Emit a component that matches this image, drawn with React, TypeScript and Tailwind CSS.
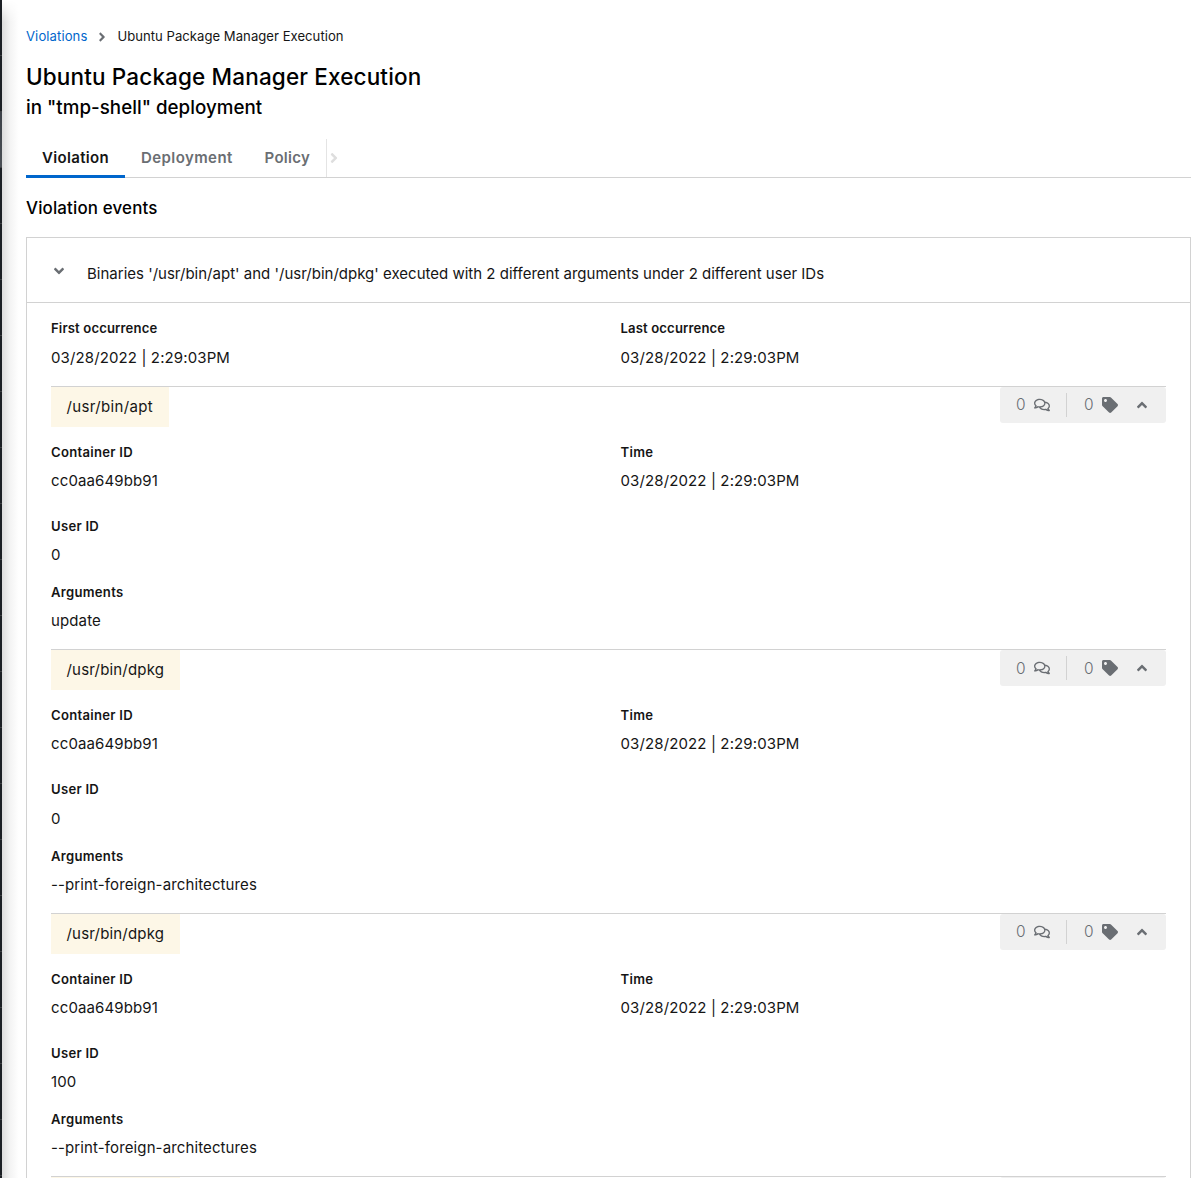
import React from "react";
import {
  FaAngleDown,
  FaAngleRight,
  FaAngleUp,
  FaRegComments,
  FaTag,
} from "react-icons/fa";

type Process = {
  path: string;
  pathClass: string;
  containerId: string;
  time: string;
  userId: string;
  args: string;
};

const TIME = "03/28/2022 | 2:29:03PM";
const APT = "w-[118px] tracking-[0.34px]";
const DPKG = "w-[129px] tracking-[0.18px]";

const processes: Process[] = [
  { path: "/usr/bin/apt", pathClass: APT, containerId: "cc0aa649bb91", time: TIME, userId: "0", args: "update" },
  { path: "/usr/bin/dpkg", pathClass: DPKG, containerId: "cc0aa649bb91", time: TIME, userId: "0", args: "--print-foreign-architectures" },
  { path: "/usr/bin/dpkg", pathClass: DPKG, containerId: "cc0aa649bb91", time: TIME, userId: "100", args: "--print-foreign-architectures" },
];

type FieldProps = { label: string; value: string; gap?: string; tracking?: string };

function Field({ label, value, gap = "gap-[6px]", tracking = "tracking-[0.28px]" }: FieldProps) {
  return (
    <div className={`flex flex-col ${gap}`}>
      <div className={`text-[13.1px] leading-[21px] font-semibold ${tracking}`}>{label}</div>
      <div className="text-[15px] leading-6 tracking-[0.12px]">{value}</div>
    </div>
  );
}

function ProcessCard({ process }: { process: Process }) {
  return (
    <section className="h-[263.5px] shrink-0 border-t border-[#d2d2d2]">
      <div className="flex h-10 items-start justify-between">
        <div className={`h-10 bg-[#fdf7e7] pl-[15.5px] text-[15px] leading-10 whitespace-nowrap ${process.pathClass}`}>
          {process.path}
        </div>
        <div className="flex h-9 w-[166px] items-center rounded-[3px] bg-[#f0f0f0] pl-4 text-[#6a6e73]">
          <span className="w-[18px] text-[15.5px] font-light">0</span>
          <FaRegComments size={16} />
          <span className="ml-4 h-6 w-px bg-[#d2d2d2]" />
          <span className="ml-[17px] w-[18px] text-[15.5px] font-light">0</span>
          <FaTag size={16} />
          <FaAngleUp size={16} className="ml-4" />
        </div>
      </div>
      <div className="grid grid-cols-2 gap-x-6 pt-[15px]">
        <Field label="Container ID" value={process.containerId} />
        <Field label="Time" value={process.time} />
      </div>
      <div className="pt-[23px]">
        <Field label="User ID" value={process.userId} gap="gap-[6.2px]" />
      </div>
      <div className="pt-[15.2px]">
        <Field label="Arguments" value={process.args} />
      </div>
    </section>
  );
}

export default function App() {
  return (
    <div className="flex h-[1178px] w-full overflow-hidden bg-white font-['Inter',sans-serif] text-[#151515]">
      <div className="flex w-0.5 shrink-0 flex-col bg-[#1b1f24]">
        {Array.from({ length: 21 }, (_, i) => (
          <div
            key={i}
            className={`h-14 shrink-0 border-b border-[#3c3f42] ${i === 2 ? "bg-linear-to-b from-[#3c4148] to-[#4a4f55]" : ""}`}
          />
        ))}
      </div>
      <div className="w-6 shrink-0 bg-linear-to-r from-[#dcdcdc] via-[#f4f4f4] via-35% to-white to-70% mask-[linear-gradient(to_bottom,transparent,black_22px)]" />
      <main className="flex min-w-0 flex-1 flex-col">
        <nav className="mt-[26px] flex h-[21px] shrink-0 items-center text-[13.1px]">
          <a className="w-[69px] tracking-[0.09px] text-[#0066cc]">Violations</a>
          <FaAngleRight size={14} className="mr-[8.4px] text-[#6a6e73]" />
          <span className="tracking-[0.03px]">Ubuntu Package Manager Execution</span>
        </nav>
        <h1 className="mt-[14px] text-[22.5px] leading-[31px] font-medium tracking-[0.145px] text-black">
          Ubuntu Package Manager Execution
        </h1>
        <h2 className="pt-px text-[18.75px] leading-[30px] font-medium tracking-[0.02px] text-black">
          in &quot;tmp-shell&quot; deployment
        </h2>
        <div className="mt-4 flex h-[39px] shrink-0 border-b border-[#d2d2d2] text-[15px] leading-[37px] font-semibold">
          <div className="-mb-px w-[99px] border-b-3 border-[#0066cc] pl-4 tracking-[0.33px]">Violation</div>
          <div className="w-[123px] pl-4 tracking-[0.42px] text-[#6a6e73]">Deployment</div>
          <div className="w-[78px] pl-[16.6px] tracking-[0.28px] text-[#6a6e73]">Policy</div>
          <div className="flex items-center border-l border-[#e4e4e4] text-[#dedede]">
            <FaAngleRight size={16} className="-ml-px" />
          </div>
        </div>
        <h3 className="mt-[17px] text-[16.9px] leading-[27px] font-medium tracking-[0.16px] text-black">Violation events</h3>
        <div className="mt-[15px] border border-b-0 border-[#d2d2d2]">
          <div className="flex h-[65px] items-center border-b border-[#d2d2d2] pl-6">
            <FaAngleDown size={16} className="mt-px mr-5 text-[#6a6e73]" />
            <span className="pt-[7px] text-[15px] leading-6 tracking-[0.004px]">
              Binaries &apos;/usr/bin/apt&apos; and &apos;/usr/bin/dpkg&apos; executed with 2 different arguments under 2 different user IDs
            </span>
          </div>
          <div className="flex flex-col px-6">
            <div className="grid h-[82.9px] grid-cols-2 gap-x-6 pt-[15px]">
              <Field label="First occurrence" value={TIME} gap="gap-[7px]" tracking="tracking-[0.14px]" />
              <Field label="Last occurrence" value={TIME} gap="gap-[7px]" tracking="tracking-[0.14px]" />
            </div>
            {processes.map((process, i) => (
              <ProcessCard key={i} process={process} />
            ))}
            <div className="flex h-10 justify-between border-t border-[#d2d2d2]">
              <div className="w-[129px] bg-[#fdf7e7]" />
              <div className="w-[166px] rounded-[3px] bg-[#f0f0f0]" />
            </div>
          </div>
        </div>
      </main>
    </div>
  );
}
